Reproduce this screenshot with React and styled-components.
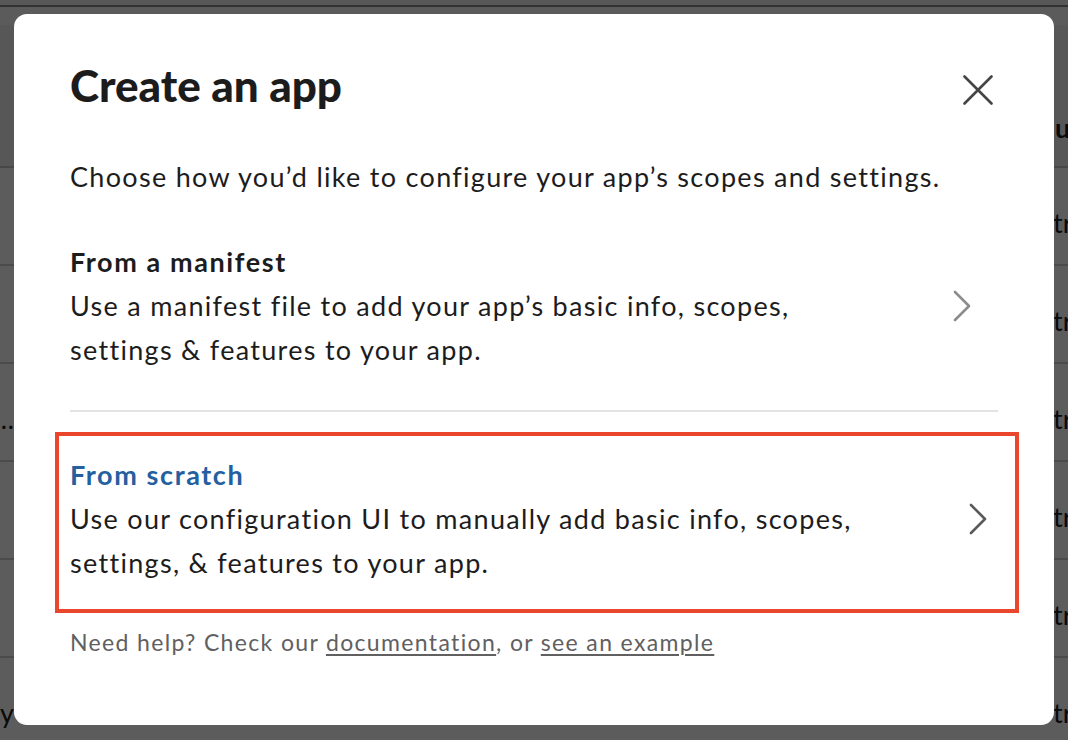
import React from "react";
import styled, { createGlobalStyle } from "styled-components";

const Global = createGlobalStyle`
  html, body { margin: 0; padding: 0; }
  body {
    width: 1068px;
    height: 740px;
    overflow: hidden;
    font-family: "Lato", "Noto Sans", "Liberation Sans", sans-serif;
    background: #ffffff;
  }
  * { box-sizing: border-box; }
`;

/* ---------- underlying page (dimmed) ---------- */
const Page = styled.div`
  width: 1068px;
  height: 740px;
  overflow: hidden;
  background: #ffffff;
  color: #1d1c1d;
`;

const TopStrip = styled.div`
  height: 7px;
  background: #f4f4f4;
  border-bottom: 2px solid #8a8a8a;
`;

const HeaderRow = styled.div`
  height: 161px;
  display: grid;
  grid-template-columns: 14px 1041px 1fr;
  align-items: end;
  padding-bottom: 22px;
  border-bottom: 2px solid #c8c8c8;
  font-size: 27px;
  font-weight: 700;
  background: linear-gradient(#fbfbfb 0 18px, #f2f2f2 18px);
`;

const Row = styled.div`
  height: 98px;
  display: grid;
  grid-template-columns: 14px 1039px 1fr;
  align-items: center;
  padding-top: 12px;
  border-bottom: 2px solid #cfcfcf;
  font-size: 27px;
`;

const LeftCell = styled.div`
  display: flex;
  justify-content: flex-end;
  overflow: hidden;
  white-space: nowrap;
`;

const RightCell = styled.div`
  white-space: nowrap;
  overflow: hidden;
`;

/* ---------- overlay + modal ---------- */
const Overlay = styled.div`
  position: fixed;
  inset: 0;
  background: rgba(0, 0, 0, 0.64);
  padding: 14px;
  display: flex;
  align-items: flex-start;
  justify-content: center;
`;

const Modal = styled.div`
  width: 1040px;
  height: 711px;
  background: #ffffff;
  border-radius: 13px;
  padding: 45px 56px 0 56px;
  color: #1d1c1d;
  display: flex;
  flex-direction: column;
`;

const TitleBar = styled.div`
  display: flex;
  justify-content: space-between;
  align-items: flex-start;
`;

const Title = styled.h1`
  margin: 0;
  font-size: 44px;
  line-height: 52px;
  font-weight: 900;
  letter-spacing: 0;
`;

const CloseButton = styled.button`
  width: 40px;
  height: 40px;
  margin-top: 11px;
  padding: 0;
  border: 0;
  background: transparent;
  display: flex;
  align-items: center;
  justify-content: center;
  cursor: pointer;
`;

const Lead = styled.p`
  margin: 44px 0 0 0;
  font-size: 27px;
  line-height: 44px;
  letter-spacing: 1.3px;
`;

const Option = styled.div`
  padding: ${(p) => p.$pad};
  border-bottom: ${(p) => (p.$divider ? "2px solid #e3e3e3" : "none")};
`;

const Highlight = styled.div`
  margin: 0 -21px 0 -15px;
  border: 4px solid #e9462b;
  padding: 17px 17px 24px 11px;
`;

const OptionRow = styled.div`
  display: flex;
  align-items: center;
  justify-content: space-between;
`;

const OptionText = styled.div`
  max-width: 800px;
  font-size: 27px;
  line-height: 44px;
`;

const OptionTitle = styled.div`
  font-weight: 700;
  letter-spacing: 1.6px;
  color: ${(p) => p.$color};
`;

const OptionDesc = styled.div`
  font-weight: 400;
  letter-spacing: 1.3px;
`;

const Chevron = styled.svg`
  flex: none;
  margin-right: ${(p) => p.$mr}px;
`;

const Footer = styled.p`
  margin: 13px 0 0 0;
  font-size: 23px;
  line-height: 32px;
  letter-spacing: 1.35px;
  color: #616061;
`;

const FooterLink = styled.a`
  color: #616061;
  text-decoration: underline;
  text-underline-offset: 3px;
  text-decoration-thickness: 1.5px;
`;

function ChevronIcon({ color, mr }) {
  return (
    <Chevron $mr={mr} width="18" height="32" viewBox="0 0 18 32" fill="none">
      <path
        d="M2 2 L16 16 L2 30"
        stroke={color}
        strokeWidth="2.6"
        strokeLinecap="round"
        strokeLinejoin="round"
      />
    </Chevron>
  );
}

export default function App() {
  return (
    <>
      <Global />
      <Page>
        <TopStrip />
        <HeaderRow>
          <LeftCell />
          <div />
          <RightCell>u</RightCell>
        </HeaderRow>
        <Row>
          <LeftCell />
          <div />
          <RightCell>tr</RightCell>
        </Row>
        <Row>
          <LeftCell />
          <div />
          <RightCell>tr</RightCell>
        </Row>
        <Row>
          <LeftCell>Workspace…</LeftCell>
          <div />
          <RightCell>tr</RightCell>
        </Row>
        <Row>
          <LeftCell />
          <div />
          <RightCell>tr</RightCell>
        </Row>
        <Row>
          <LeftCell />
          <div />
          <RightCell>tr</RightCell>
        </Row>
        <Row>
          <LeftCell>Everyday</LeftCell>
          <div />
          <RightCell>tr</RightCell>
        </Row>
      </Page>

      <Overlay>
        <Modal role="dialog" aria-label="Create an app">
          <TitleBar>
            <Title>Create an app</Title>
            <CloseButton aria-label="Close">
              <svg width="30" height="30" viewBox="0 0 30 30" fill="none">
                <path
                  d="M1.5 1.5 L28.5 28.5 M28.5 1.5 L1.5 28.5"
                  stroke="#454545"
                  strokeWidth="2.6"
                  strokeLinecap="round"
                />
              </svg>
            </CloseButton>
          </TitleBar>

          <Lead>Choose how you’d like to configure your app’s scopes and settings.</Lead>

          <Option $pad="41px 0 38px 0" $divider>
            <OptionRow>
              <OptionText>
                <OptionTitle $color="#1d1c1d">From a manifest</OptionTitle>
                <OptionDesc>
                  Use a manifest file to add your app’s basic info, scopes, settings &amp; features to your app.
                </OptionDesc>
              </OptionText>
              <ChevronIcon color="#8c8c8c" mr={27} />
            </OptionRow>
          </Option>

          <Option $pad="20px 0 0 0">
            <Highlight>
              <OptionRow>
                <OptionText>
                  <OptionTitle $color="#245f9f">From scratch</OptionTitle>
                  <OptionDesc>
                    Use our configuration UI to manually add basic info, scopes, settings, &amp; features to your app.
                  </OptionDesc>
                </OptionText>
                <ChevronIcon color="#5a5a5a" mr={11} />
              </OptionRow>
            </Highlight>
          </Option>

          <Footer>
            Need help? Check our <FooterLink href="#">documentation</FooterLink>, or{" "}
            <FooterLink href="#">see an example</FooterLink>
          </Footer>
        </Modal>
      </Overlay>
    </>
  );
}
